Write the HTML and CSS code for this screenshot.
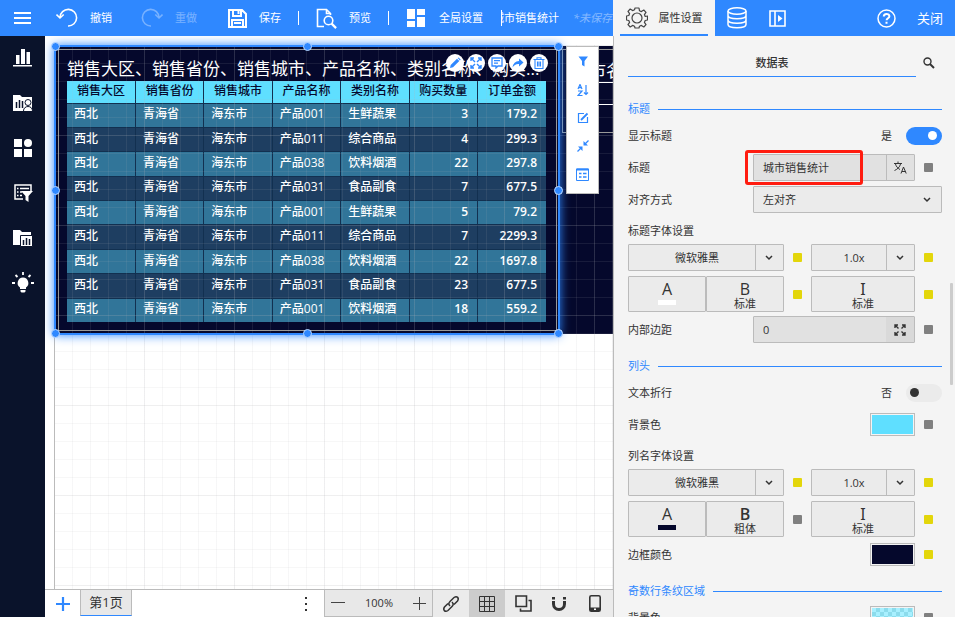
FILE: index.html
```html
<!DOCTYPE html>
<html lang="zh-CN">
<head>
<meta charset="utf-8">
<title>城市销售统计</title>
<link rel="stylesheet" href="styles.css">
</head>
<body>
<div class="app">
  <section class="workspace">
    <header class="topbar">
      <button class="menu-btn" aria-label="菜单"><svg width="17" height="14" viewBox="0 0 17 14" stroke="#fff" stroke-width="2"><path d="M0 2h17M0 7h17M0 12h17"/></svg></button>
      <button class="tool tool-undo"><svg width="22" height="22" viewBox="0 0 22 22" fill="none" stroke="#fff" stroke-width="1.6"><path d="M4 10.500A8.300 8.300 0 1 1 12 19M0.500 7.500L4 11l3.700-3.500"/></svg>撤销</button>
      <button class="tool tool-redo" disabled><svg width="22" height="22" viewBox="0 0 22 22" fill="none" stroke="#fff" stroke-width="1.600"><path d="M18 10.500A8.300 8.300 0 1 0 10 19M21.500 7.500L18 11l-3.700-3.500"/></svg>重做</button>
      <button class="tool tool-save"><svg width="19" height="19" viewBox="0 0 19 19" fill="none" stroke="#fff" stroke-width="2"><path d="M1 1h13l4 4v13H1zM5 1v6h8V1M4 18v-7h11v7"/><path d="M10.500 2v3M6 14h7"/></svg>保存</button>
      <i class="sep"></i>
      <button class="tool"><svg width="21" height="21" viewBox="0 0 21 21" fill="none" stroke="#fff" stroke-width="1.600"><path d="M8 18.500H1.500V1.500h9l4 4V7M10.500 1.500v4h4"/><circle cx="12.500" cy="12.500" r="4.300"/><path stroke-width="2.200" d="M15.600 15.600l4.500 4.500"/></svg>预览</button>
      <i class="sep"></i>
      <button class="tool tool-global"><svg width="18" height="18" viewBox="0 0 18 18" fill="#fff"><path d="M0 0h8v10H0zM10 0h8v6h-8zM0 12h8v6H0zM10 8h8v10h-8z"/></svg>全局设置</button>
      <div class="filename"><span>城市销售统计</span></div>
      <em class="unsaved">*未保存</em>
    </header>

    <div class="body">
      <nav class="rail">
        <button aria-label="图表"><svg width="20" height="20" viewBox="0 0 20 20" fill="#fff"><path d="M3 7h3.500v9H3zM8 1h4v15H8zM13.500 4H17v12h-3.500zM0 17h19v1.500H0z"/></svg></button>
        <button aria-label="我的图表"><svg width="20" height="20" viewBox="0 0 20 20"><path fill="#fff" d="M0 2h7l2 2h10v14H0z"/><path stroke="#0a132b" stroke-width="1.500" d="M3.500 9v6M6.500 7v8M9.500 8v7"/><circle cx="15" cy="9.500" r="3" fill="#fff" stroke="#0a132b"/><path fill="#fff" stroke="#0a132b" d="M10.500 18c0-6 9-6 9 0"/></svg></button>
        <button aria-label="组件"><svg width="20" height="20" viewBox="0 0 20 20" fill="#fff"><path d="M1 1h8v8H1zM1 11h8v8H1zM11 11h8v8h-8z"/><circle cx="15" cy="5" r="4"/></svg></button>
        <button aria-label="筛选器"><svg width="20" height="20" viewBox="0 0 20 20" fill="none" stroke="#fff" stroke-width="1.500"><path d="M10 16H2V2h16v6M4 5.500h1.500M7 5.500h9M4 9h1.500M7 9h2M4 12.500h1.500M7 12.500h2"/><path fill="#fff" stroke="none" d="M8 8h12l-4.500 5v6l-3-2v-4z"/></svg></button>
        <button aria-label="资源"><svg width="20" height="20" viewBox="0 0 20 20"><path fill="#fff" d="M0 2h7l2 2h9v13H0z"/><path fill="#fff" stroke="#0a132b" d="M7.500 7.500h12v11h-12z"/><path stroke="#0a132b" stroke-width="1.500" d="M10.500 12v5M13.500 10v7M16.500 11v6"/></svg></button>
        <button aria-label="提示"><svg width="22" height="22" viewBox="0 0 22 22" fill="#fff"><path d="M11 5.500a5.500 5.500 0 0 0-3 10V17h6v-1.500a5.500 5.500 0 0 0-3-10zM8.500 18h5v1.500l-1 1h-3l-1-1z"/><path stroke="#fff" stroke-width="1.800" d="M11 0v3M3.500 3l2 2M18.500 3l-2 2M0 11h3M19 11h3"/></svg></button>
      </nav>

      <main class="stage">
        <div class="canvas">
          <div class="board"></div>
          <div class="widget-back"><p>市名称</p><span></span></div>
          <article class="widget">
            <h2>销售大区、销售省份、销售城市、产品名称、类别名称、购买...</h2>
            <table>
              <thead><tr><th>销售大区</th><th>销售省份</th><th>销售城市</th><th>产品名称</th><th>类别名称</th><th>购买数量</th><th>订单金额</th></tr></thead>
              <tbody>
                <tr><td>西北</td><td>青海省</td><td>海东市</td><td>产品001</td><td>生鲜蔬果</td><td>3</td><td>179.2</td></tr>
                <tr><td>西北</td><td>青海省</td><td>海东市</td><td>产品011</td><td>综合商品</td><td>4</td><td>299.3</td></tr>
                <tr><td>西北</td><td>青海省</td><td>海东市</td><td>产品038</td><td>饮料烟酒</td><td>22</td><td>297.8</td></tr>
                <tr><td>西北</td><td>青海省</td><td>海东市</td><td>产品031</td><td>食品副食</td><td>7</td><td>677.5</td></tr>
                <tr><td>西北</td><td>青海省</td><td>海东市</td><td>产品001</td><td>生鲜蔬果</td><td>5</td><td>79.2</td></tr>
                <tr><td>西北</td><td>青海省</td><td>海东市</td><td>产品011</td><td>综合商品</td><td>7</td><td>2299.3</td></tr>
                <tr><td>西北</td><td>青海省</td><td>海东市</td><td>产品038</td><td>饮料烟酒</td><td>22</td><td>1697.8</td></tr>
                <tr><td>西北</td><td>青海省</td><td>海东市</td><td>产品031</td><td>食品副食</td><td>23</td><td>677.5</td></tr>
                <tr><td>西北</td><td>青海省</td><td>海东市</td><td>产品001</td><td>饮料烟酒</td><td>18</td><td>559.2</td></tr>
              </tbody>
            </table>
          </article>
          <div class="gridlines"></div>
          <div class="selection"><i class="h nw"></i><i class="h n"></i><i class="h ne"></i><i class="h w"></i><i class="h e"></i><i class="h sw"></i><i class="h s"></i><i class="h se"></i></div>
          <div class="quick">
            <button aria-label="编辑"><svg width="12" height="12" viewBox="0 0 12 12" fill="#2f88ff"><path d="M1 11l.7-3L8 1.800l2.300 2.300L4 10.300zM8.700 1.100l.8-.7 2.200 2.200-.8.800z"/></svg></button>
            <button aria-label="最大化"><svg width="12" height="12" viewBox="0 0 12 12" fill="none" stroke="#2f88ff" stroke-width="1.400"><path d="M1 4V1h3M8 1h3v3M11 8v3H8M4 11H1V8M1 1l4 4M11 1L7 5M11 11L7 7M1 11l4-4"/></svg></button>
            <button aria-label="注释"><svg width="12" height="12" viewBox="0 0 12 12" fill="none" stroke="#2f88ff" stroke-width="1.300"><path d="M1 1h10v8H7l-2 2V9H1zM3 3.700h6M3 6.200h4"/></svg></button>
            <button aria-label="分享"><svg width="12" height="12" viewBox="0 0 12 12" fill="#2f88ff"><path d="M7 1.500L11.500 5.500 7 9.500V7Q3 6.500.5 10.500 1.500 4 7 4z"/></svg></button>
            <button aria-label="删除"><svg width="12" height="12" viewBox="0 0 12 12" fill="none" stroke="#2f88ff" stroke-width="1.100"><path d="M.5 2.500h11M4 2.500V.700h4v1.800M2 2.500v9h8v-9M4.500 4.500v5M6 4.500v5M7.500 4.500v5"/></svg></button>
          </div>
          <div class="side-menu">
            <button aria-label="筛选"><svg width="12" height="12" viewBox="0 0 12 12" fill="#2f88ff"><path d="M1.500 1.500h9.500L7.500 6v5.500L5 10V6z"/></svg></button>
            <button aria-label="排序"><svg width="12" height="12" viewBox="0 0 12 12" fill="none" stroke="#2f88ff" stroke-width="1.200"><path d="M1 5l2-4.500L5 5M2 3.600h2M1 7h4l-4 4.500h4.500M9 1v9.500M7 8.500l2 2 2-2"/></svg></button>
            <button aria-label="修改"><svg width="12" height="12" viewBox="0 0 12 12" fill="none" stroke="#2f88ff" stroke-width="1.200"><path d="M7 1.500H1.500v9h9V5"/><path stroke-width="1.800" d="M4 8l6.500-6.500"/></svg></button>
            <button aria-label="收缩"><svg width="12" height="12" viewBox="0 0 12 12" fill="#2f88ff" stroke="#2f88ff" stroke-width="1.300"><path d="M11.500.5L8 4M.5 11.500L4 8"/><path stroke="none" d="M6.500 1v4.500H11zM5.500 11V6.500H1z"/></svg></button>
            <button aria-label="图例"><svg width="13" height="13" viewBox="0 0 13 13" fill="none" stroke="#2f88ff"><path d="M.5 1h12v11.500H.5z"/><path stroke-width="2" d="M.5 1.500h12"/><path stroke-width="1.600" d="M3 5.500h2.500M7 5.500h3.500M3 9h2.500M7 9h3.500"/></svg></button>
          </div>
        </div>

        <footer class="bottombar">
          <button class="add" aria-label="添加页"><svg width="14" height="14" viewBox="0 0 14 14" stroke="#2f88ff" stroke-width="2.200"><path d="M0 7h14M7 0v14"/></svg></button>
          <button class="page-tab">第1页</button>
          <button class="more" aria-label="更多"><svg width="4" height="14" viewBox="0 0 4 14" fill="#333"><path d="M1 0h2v2H1zM1 6h2v2H1zM1 12h2v2H1z"/></svg></button>
          <div class="zoom">
            <button aria-label="缩小"><svg width="14" height="14" viewBox="0 0 14 14" stroke="#444"><path d="M0 6.500h14"/></svg></button>
            <span>100%</span>
            <button aria-label="放大"><svg width="13" height="13" viewBox="0 0 13 13" stroke="#444"><path d="M0 6.500h13M6.500 0v13"/></svg></button>
          </div>
          <button class="opt" aria-label="链接"><svg width="18" height="18" viewBox="0 0 18 18" fill="none" stroke="#333" stroke-width="1.500"><path d="M8 11c-2-2-1-3.500 0-4.500l4-4c3-2 5.500.5 3.500 3.500L12 9.500M10 7c2 2 1 3.500 0 4.500l-4 4c-3 2-5.500-.5-3.500-3.500L6 8.500"/></svg></button>
          <button class="opt on" aria-label="网格"><svg width="16" height="16" viewBox="0 0 16 16" fill="none" stroke="#333"><path d="M.5.500h15v15H.5zM5.500 0v16M10.500 0v16M0 5.500h16M0 10.500h16"/></svg></button>
          <button class="opt" aria-label="图层"><svg width="17" height="17" viewBox="0 0 17 17" fill="none" stroke="#333" stroke-width="1.600"><path d="M1 1h10.500v10.500H1zM13.500 5.500h2.500V16H5.500v-2.500"/></svg></button>
          <button class="opt" aria-label="吸附"><svg width="16" height="16" viewBox="0 0 16 16" fill="none" stroke="#333" stroke-width="3"><path d="M2.500 5v3a5.500 5.500 0 0 0 11 0V5M2.500 1v2.500M13.500 1v2.500"/></svg></button>
          <button class="opt" aria-label="移动端"><svg width="12" height="17" viewBox="0 0 12 17"><rect x=".8" y=".8" width="10.400" height="15.400" rx="1.500" fill="none" stroke="#333" stroke-width="1.600"/><path fill="#333" d="M1 12.500h10V16H1z"/><path fill="#fff" d="M5 13.500h2V15H5z"/></svg></button>
        </footer>
      </main>
    </div>
  </section>

  <aside class="panel">
    <header class="tabs">
      <button class="tab active"><svg width="22" height="22" viewBox="0 0 22 22" fill="none" stroke="#444" stroke-width="1.200" stroke-linejoin="round"><path d="M9 1h4l.5 2.800 1.900.8 2.400-1.600 2.200 2.300-1.600 2.300.8 1.900L21.500 9v4l-2.300.5-.8 1.900 1.600 2.300-2.200 2.300-2.400-1.600-1.900.8L13 21H9l-.5-1.800-1.900-.8L4.200 20 2 17.700l1.600-2.300-.8-1.900L.5 13V9l2.300-.5.8-1.900L2 4.300 4.200 2l2.400 1.600 1.900-.8z"/><circle cx="11" cy="11" r="5"/></svg>属性设置</button>
      <div class="tab-rest">
        <button aria-label="数据"><svg width="20" height="22" viewBox="0 0 20 22" fill="none" stroke="#fff" stroke-width="1.500"><ellipse cx="10" cy="4" rx="9" ry="3.200"/><path d="M1 4v4.500c0 4.300 18 4.300 18 0V4M1 8.500V13c0 4.300 18 4.300 18 0V8.500M1 13v4.500c0 4.300 18 4.300 18 0V13"/></svg></button>
        <button class="collapse" aria-label="收起"><svg width="17" height="17" viewBox="0 0 17 17" fill="none" stroke="#fff" stroke-width="1.600"><path d="M1 1h15v15H1zM6 1v15"/><path fill="#fff" stroke="none" d="M9 5l4.500 3.500L9 12z"/></svg></button>
        <button class="help" aria-label="帮助"><svg width="19" height="19" viewBox="0 0 19 19" fill="none" stroke="#fff" stroke-width="1.500"><circle cx="9.500" cy="9.500" r="8.500"/><path stroke-width="2" d="M6.800 7.500c0-3.500 5.600-3.300 5.600-.2 0 2-2.800 2-2.800 4M9.500 12.800v2"/></svg></button>
        <button class="close">关闭</button>
      </div>
    </header>

    <form class="props">
      <div class="heading"><h1>数据表</h1><button type="button" aria-label="搜索"><svg width="12" height="12" viewBox="0 0 12 12" fill="none" stroke="#333" stroke-width="1.400"><circle cx="4.500" cy="4.500" r="3.500"/><path stroke-width="1.900" d="M7 7l4 4"/></svg></button></div>

      <h3 class="section">标题</h3>
      <div class="row"><label for="show">显示标题</label><span class="state">是</span><input id="show" class="switch" type="checkbox" checked></div>
      <div class="row"><label for="ttl">标题</label>
        <div class="field marked"><input id="ttl" type="text" value="城市销售统计"><button type="button" aria-label="翻译"><svg width="13" height="13" viewBox="0 0 13 13" fill="none" stroke="#333"><path d="M0 2.500h8M4 .5v2M6.500 3C6 6 3 8.500.5 9.500M1.500 3C2 5.500 4 7.500 6 8.500M7 12.500l2.500-6.500 2.700 6.500M8 10.500h3.500"/></svg></button></div><i class="dot"></i></div>
      <div class="row"><label for="align">对齐方式</label><select id="align" class="wide"><option>左对齐</option></select></div>

      <p class="caption">标题字体设置</p>
      <div class="pair"><select class="split" aria-label="标题字体"><option>微软雅黑</option></select><i class="dot"></i><select class="split" aria-label="标题字号"><option>1.0x</option></select><i class="dot"></i></div>
      <div class="pair styles"><div class="twin"><button type="button" aria-label="标题颜色"><b>A</b><i class="ink"></i></button><button type="button"><b>B</b>标准</button></div><i class="dot"></i><button type="button"><b class="serif">I</b>标准</button><i class="dot"></i></div>
      <div class="row"><label for="pad">内部边距</label>
        <div class="field expand"><input id="pad" type="text" value="0"><button type="button" aria-label="展开"><svg width="12" height="12" viewBox="0 0 12 12" fill="none" stroke="#333" stroke-width="1.400"><path d="M1 4V1h3M8 1h3v3M11 8v3H8M4 11H1V8M1 1l3.500 3.500M11 1L7.500 4.500M11 11L7.500 7.500M1 11l3.500-3.500"/></svg></button></div><i class="dot"></i></div>

      <h3 class="section">列头</h3>
      <div class="row"><label for="wrap">文本折行</label><span class="state">否</span><input id="wrap" class="switch" type="checkbox"></div>
      <div class="row"><label for="bg">背景色</label><button type="button" id="bg" class="swatch cyan"></button><i class="dot"></i></div>
      <p class="caption">列名字体设置</p>
      <div class="pair"><select class="split" aria-label="列名字体"><option>微软雅黑</option></select><i class="dot"></i><select class="split" aria-label="列名字号"><option>1.0x</option></select><i class="dot"></i></div>
      <div class="pair styles"><div class="twin"><button type="button" aria-label="列名颜色"><b>A</b><i class="ink navy"></i></button><button type="button"><b class="bold">B</b>粗体</button></div><i class="dot grey"></i><button type="button"><b class="serif">I</b>标准</button><i class="dot"></i></div>
      <div class="row"><label for="bd">边框颜色</label><button type="button" id="bd" class="swatch navy"></button><i class="dot yellow"></i></div>

      <h3 class="section">奇数行条纹区域</h3>
      <div class="row"><label for="odd">背景色</label><button type="button" id="odd" class="swatch checker"></button><i class="dot"></i></div>
      <i class="scroll-thumb"></i>
    </form>
  </aside>
</div>
</body>
</html>
```
FILE: styles.css
```css
*, *::before, *::after { box-sizing: border-box; }
body {
  margin: 0;
  font: 11px/16px "Open Sans", "Noto Sans CJK SC", sans-serif;
  color: #333;
}
button, input, select { font: inherit; color: inherit; margin: 0; }
button { border: 0; padding: 0; background: none; display: flex; align-items: center; justify-content: center; }
svg { display: block; flex: none; }
h1, h2, h3, p { margin: 0; font-weight: 400; }

.app { display: flex; height: 100vh; overflow: hidden; }
.workspace { flex: 1; min-width: 0; display: flex; flex-direction: column; }

/* Top bar */
.topbar {
  flex: none; height: 36px; display: flex; align-items: center;
  background: #2f88ff; color: #fff; overflow: hidden; white-space: nowrap;
}
.menu-btn { width: 45px; height: 36px; flex: none; }
.tool { flex: none; gap: 12px; }
.tool-undo { margin-left: 11px; }
.tool-redo { margin: 0 31px 0 29px; color: #fff; opacity: .35; }
.sep { flex: none; width: 1px; height: 14px; margin: 0 17px; background: #fff; }
.tool-global { gap: 14px; margin-left: 1px; }
.filename {
  flex: none; width: 58px; margin: 0 14px 0 18px; border-left: 1px solid #fff;
  display: flex; justify-content: flex-end; overflow: hidden;
}
.unsaved { flex: none; opacity: .4; }

/* Left rail */
.body { flex: 1; min-height: 0; display: flex; }
.rail {
  flex: none; width: 45px; padding-top: 7px; background: #0a132b;
  display: flex; flex-direction: column; gap: 15px;
}
.rail button { height: 30px; }

/* Canvas */
.stage { flex: 1; min-width: 0; display: flex; flex-direction: column; background: #fff; }
.canvas { flex: 1; min-height: 0; position: relative; overflow: hidden; }
.board { position: absolute; left: 10px; top: 10px; right: 0; height: 288px; background: #05082c; }
.gridlines {
  position: absolute; left: 9px; top: 9px; right: 0; bottom: 0; pointer-events: none;
  border-left: 1px solid #bbb;
  background:
    repeating-linear-gradient(90deg, rgba(180,180,185,.12) 0 1px, transparent 1px 90px) -1px 0,
    repeating-linear-gradient(180deg, rgba(180,180,185,.12) 0 1px, transparent 1px 90px),
    repeating-linear-gradient(90deg, rgba(180,180,185,.11) 0 1px, transparent 1px 18px) -1px 0,
    repeating-linear-gradient(180deg, rgba(180,180,185,.11) 0 1px, transparent 1px 18px);
}
.widget-back {
  position: absolute; left: 517px; top: 13px; right: -60px; height: 84px;
  border: 1px solid #999; color: #fff; font-size: 17px; line-height: 24px;
}
.widget-back p { padding: 9px 0 0 26px; height: 32px; }
.widget-back span { display: block; margin-left: 14px; height: 23px; border: solid #fff; border-width: 1px 0; }
.widget {
  position: absolute; left: 13px; top: 13px; width: 499px; height: 282px;
  padding: 7px 10px 0 8px; border: 1px solid #999; background: #05082c; color: #fff;
}
.widget h2 { font-size: 17px; line-height: 24px; white-space: nowrap; margin-right: -9px; }
.widget table { width: 100%; height: 241px; border-collapse: collapse; table-layout: fixed; font-size: 12px; line-height: 16px; }
.widget th { height: 22px; padding: 0 0 2px; background: #5fdfff; color: #05082c; font-weight: 500; text-align: center; }
.widget th + th, .widget td + td { border-left: 1px solid #123050; }
.widget td { padding: 0 7px 2px; font-weight: 500; border-top: 1px solid #123050; }
.widget tbody tr:nth-child(odd) { background: #317599; }
.widget tbody tr:nth-child(even) { background: #1e3e61; }
.widget td:nth-child(6), .widget td:nth-child(7) { text-align: right; padding-right: 9px; font-weight: 600; }

.selection {
  position: absolute; left: 9px; top: 9px; width: 506px; height: 290px;
  border: 2px solid #2f88ff; box-shadow: 0 0 10px #2f88ff;
}
.h { position: absolute; width: 9px; height: 9px; border-radius: 50%; background: #2f88ff; border: 1px solid #bcd9ff; }
.nw, .w, .sw { left: -5px; }
.ne, .e, .se { right: -5px; }
.n, .s { left: calc(50% - 4px); }
.nw, .n, .ne { top: -5px; }
.w, .e { top: calc(50% - 4px); }
.sw, .s, .se { bottom: -5px; }
.quick { position: absolute; left: 401px; top: 18px; display: flex; gap: 3px; }
.quick button { width: 18px; height: 18px; border-radius: 50%; background: #fff; }
.side-menu {
  position: absolute; left: 521px; top: 10px; width: 33px; height: 148px;
  padding-bottom: 4px; border: 1px solid #bbb; background: #fff; display: flex; flex-direction: column;
}
.side-menu button { flex: 1; }

/* Bottom bar */
.bottombar { flex: none; height: 28px; display: flex; border-top: 1px solid #bbb; background: #fff; }
.add { width: 35px; }
.page-tab {
  width: 52px; margin-bottom: 1px; padding-bottom: 2px; font-size: 13px; background: #e8e8e8;
  border: solid #bbb; border-width: 0 1px; border-bottom: 1px solid #2f88ff;
}
.more { margin-left: auto; width: 36px; }
.zoom { width: 109px; display: flex; align-items: center; justify-content: space-between; padding: 0 6px; border: 1px solid #bbb; border-top: 0; background: #e8e8e8; }
.opt { width: 36px; background: #ebebeb; }
.opt.on { background: #ccc; }

/* Property panel */
.panel { flex: none; width: 342px; display: flex; flex-direction: column; background: #f4f4f4; }
.tabs { flex: none; height: 36px; display: flex; }
.tab { width: 102px; padding: 0 7px; background: #f4f4f4; }
.tab.active { gap: 11px; background: linear-gradient(#2f88ff, #2f88ff) 50% 100% / 88px 2px no-repeat #f4f4f4; }
.tab-rest { flex: 1; display: flex; align-items: center; padding: 0 12px; background: #2f88ff; color: #fff; }
.collapse { margin-left: 22px; }
.help { margin-left: auto; }
.close { font-size: 13px; margin-left: 21px; }

.props {
  flex: 1; min-height: 0; overflow: hidden; position: relative;
  padding: 13px 13px 0 14px; border-left: 1px solid #bbb;
}
.heading { height: 28px; margin-bottom: 19px; display: flex; align-items: stretch; }
.heading h1 { flex: 1; font-size: 11px; font-weight: 500; line-height: 28px; text-align: center; border-bottom: 1px solid #2f88ff; }
.heading button { width: 26px; height: 27px; }
.section { display: flex; align-items: center; gap: 8px; height: 26px; margin-top: 10px; color: #2f88ff; font-size: 11px; }
.section::after { content: ""; flex: 1; height: 1px; background: #2f88ff; }
.row { display: flex; align-items: center; height: 27px; margin-bottom: 5px; }
.row label { flex: 1; }
.caption { height: 26px; line-height: 26px; }
.state { margin-right: 14px; }

.switch {
  appearance: none; width: 36px; height: 18px; border-radius: 9px;
  background: #ebebeb; display: flex; align-items: center; padding: 0 4px;
}
.switch::before { content: ""; width: 9px; height: 9px; border-radius: 50%; background: #333; }
.switch:checked { background: #2f88ff; justify-content: flex-end; padding-right: 5px; }
.switch:checked::before { background: #fff; }

.dot { flex: none; width: 9px; height: 9px; margin: 0 9px; border-radius: 1px; background: #808080; }
.pair .dot, .dot.yellow { background: #e3d60b; }
.pair .dot.grey { background: #808080; }

.field { position: relative; display: flex; width: 162px; height: 27px; border: 1px solid #bbb; border-radius: 1px; background: #e1e1e1; }
.field input { flex: 1; min-width: 0; border: 0; padding: 0 9px; background: none; }
.field button { width: 28px; border-left: 1px solid #bbb; }
.field.marked::after { content: ""; position: absolute; left: -9px; top: -5px; width: 118px; height: 35px; border: 3px solid #ff1c10; border-radius: 3px; pointer-events: none; }
.field.expand button { border-left: 0; background: #d9d9d9; }

select {
  appearance: none; height: 27px; padding: 0 9px; border: 1px solid #bbb; border-radius: 1px;
  background: url("data:image/svg+xml,%3Csvg xmlns='http://www.w3.org/2000/svg' width='8' height='6' fill='none' stroke='%23333' stroke-width='1.5'%3E%3Cpath d='M1 1l3 3 3-3'/%3E%3C/svg%3E") right 10px center no-repeat #ebebeb;
}
.wide { width: 189px; }
.split {
  padding: 0 28px 0 10px; text-align-last: center;
  background-image:
    url("data:image/svg+xml,%3Csvg xmlns='http://www.w3.org/2000/svg' width='8' height='6' fill='none' stroke='%23333' stroke-width='1.5'%3E%3Cpath d='M1 1l3 3 3-3'/%3E%3C/svg%3E"),
    linear-gradient(#bbb, #bbb);
  background-size: auto, 1px 100%;
  background-position: right 10px center, right 27px top;
}
.pair { display: grid; grid-template-columns: 3fr auto 2fr auto; align-items: center; margin-bottom: 5px; }
.styles { margin-bottom: 4px; }
.twin { display: grid; grid-template-columns: 1fr 1fr; }
.styles button { height: 36px; padding-top: 1px; flex-direction: column; border: 1px solid #bbb; border-radius: 1px; background: #ebebeb; line-height: 12px; }
.styles b { font-size: 16px; line-height: 18px; font-weight: 400; }
.styles b.bold { font-weight: 600; }
.styles b.serif { font-family: "Noto Sans", "DejaVu Sans", sans-serif; }
.ink { width: 18px; height: 5px; margin: 2px 0 5px; background: #fff; }
.ink.navy { background: #05082c; }

.swatch { width: 45px; height: 23px; padding: 1px; border: 1px solid #bbb; background-clip: content-box; }
.swatch.cyan { background-color: #5fdfff; }
.swatch.navy { background-color: #05082c; }
.swatch.checker { background: conic-gradient(#8cdcec 25%, #a8f0ff 0 50%, #8cdcec 0 75%, #a8f0ff 0) 0 0 / 8px 8px content-box; }
.scroll-thumb { position: absolute; right: 2px; top: 247px; width: 3px; height: 102px; border-radius: 1px; background: #ccc; }
```
